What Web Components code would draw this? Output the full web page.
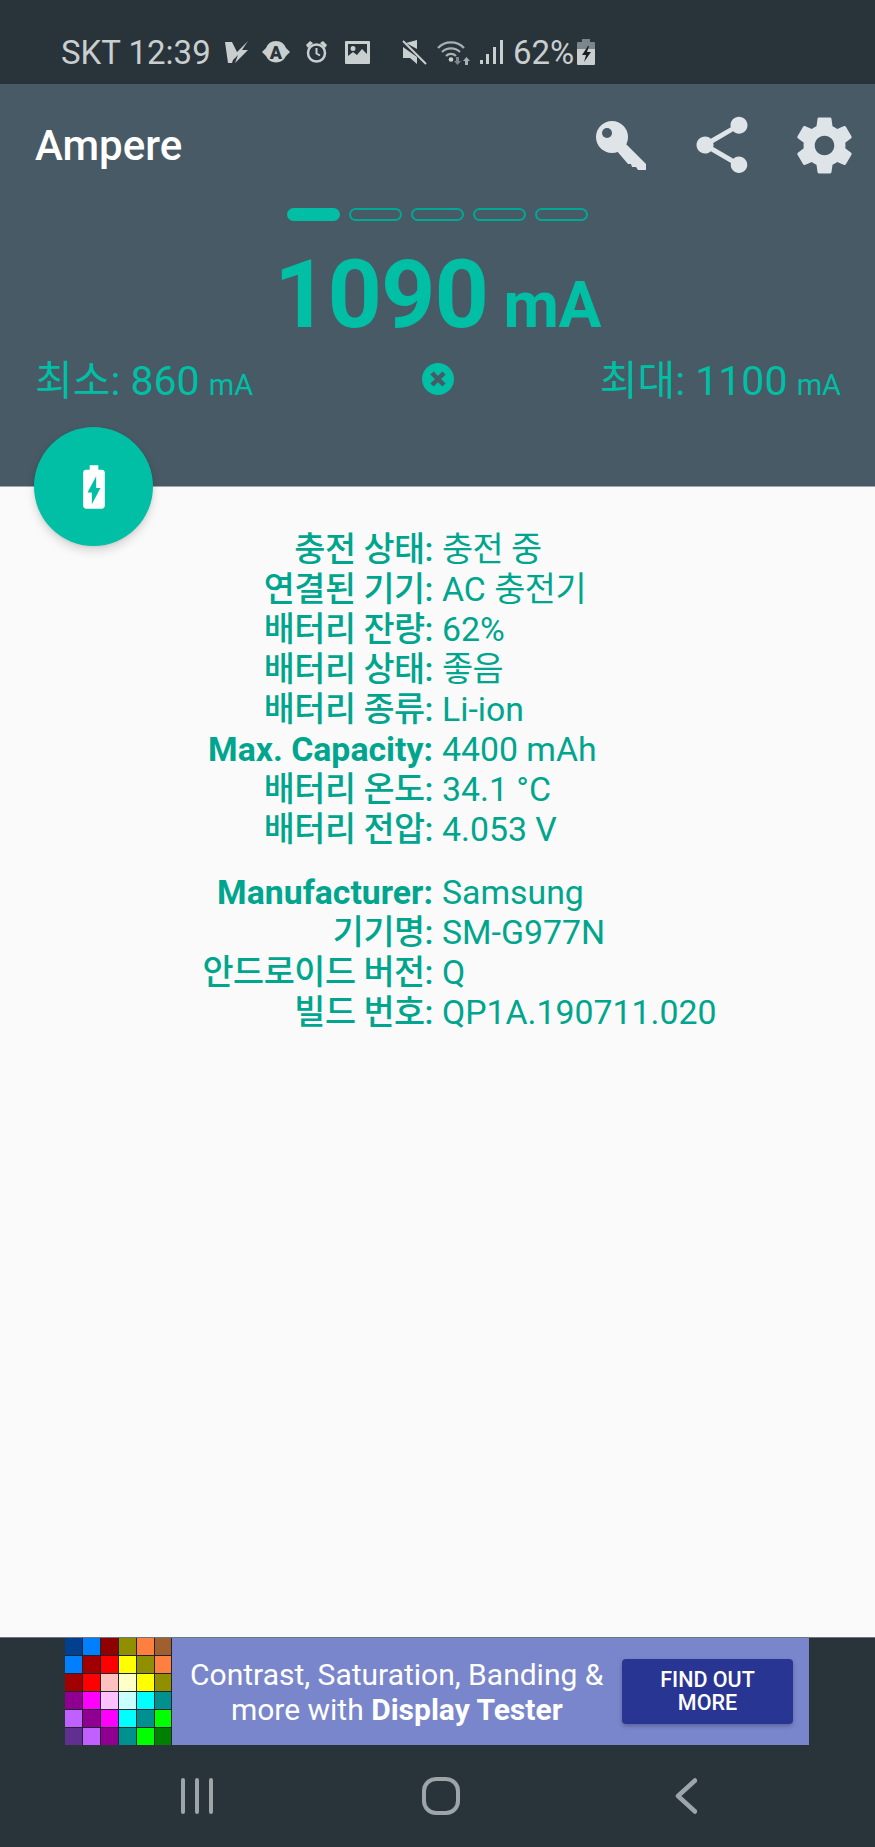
<!DOCTYPE html>
<html lang="ko">
<head>
<meta charset="utf-8">
<title>Ampere</title>
<style>
  html, body { margin: 0; padding: 0; background: #fafafa; }
  body { font-family: Roboto, "Noto Sans CJK KR", sans-serif; }
</style>
</head>
<body>
<ampere-app>
  <status-bar></status-bar>
  <app-header></app-header>
  <info-panel>
    <info-group>
      <info-row><span slot="label" lang="ko">충전 상태:</span><span lang="ko">충전 중</span></info-row>
      <info-row><span slot="label" lang="ko">연결된 기기:</span>AC <span lang="ko">충전기</span></info-row>
      <info-row><span slot="label" lang="ko">배터리 잔량:</span>62%</info-row>
      <info-row><span slot="label" lang="ko">배터리 상태:</span><span lang="ko">좋음</span></info-row>
      <info-row><span slot="label" lang="ko">배터리 종류:</span>Li-ion</info-row>
      <info-row><span slot="label">Max. Capacity:</span>4400 mAh</info-row>
      <info-row><span slot="label" lang="ko">배터리 온도:</span>34.1 °C</info-row>
      <info-row><span slot="label" lang="ko">배터리 전압:</span>4.053 V</info-row>
    </info-group>
    <info-group>
      <info-row><span slot="label">Manufacturer:</span>Samsung</info-row>
      <info-row><span slot="label" lang="ko">기기명:</span>SM-G977N</info-row>
      <info-row><span slot="label" lang="ko">안드로이드 버전:</span>Q</info-row>
      <info-row><span slot="label" lang="ko">빌드 번호:</span>QP1A.190711.020</info-row>
    </info-group>
  </info-panel>
  <charge-fab></charge-fab>
  <bottom-bar>
    <ad-banner></ad-banner>
    <nav-bar></nav-bar>
  </bottom-bar>
</ampere-app>

<script>
// Page shell
class AmpereApp extends HTMLElement {
  constructor() {
    super();
    this.attachShadow({ mode: "open" });
  }
  connectedCallback() {
    this.shadowRoot.innerHTML = `
      <style>
        :host {
          position: relative;
          display: flex;
          flex-direction: column;
          width: 875px;
          height: 1847px;
          overflow: hidden;
          background: #fafafa;
        }
      </style>
      <slot></slot>
    `;
  }
}

// Android status bar
class StatusBar extends HTMLElement {
  constructor() {
    super();
    this.attachShadow({ mode: "open" });
  }
  connectedCallback() {
    this.shadowRoot.innerHTML = `
      <style>
        :host {
          display: flex;
          align-items: center;
          flex: none;
          height: 84px;
          padding: 20px 0 0 61px;
          box-sizing: border-box;
          background: #29333a;
          color: #c9cecf;
          font: 400 33px/1 Roboto, sans-serif;
        }
        svg { display: block; flex: none; fill: #c9cecf; }
        .carrier { width: 164px; white-space: pre; }
        .pct { margin-left: 10px; width: 64px; white-space: nowrap; }
      </style>
      <span class="carrier">SKT 12:39</span>
      <!-- app notification icons -->
      <svg width="23" height="23" viewBox="0 0 23 23"><path d="M0 1h7l5 10L23 0l-6 9h6L10 22l3-8-5 5-1 3H3z"/></svg>
      <svg style="margin-left:14px" width="28" height="24" viewBox="0 0 28 24">
        <path d="M14 1a11 11 0 0 1 10 7l4 4-4 4a11 11 0 0 1-20 0l-4-4 4-4A11 11 0 0 1 14 1z"/>
        <text x="14" y="19" text-anchor="middle" font-family="Roboto" font-weight="900" font-size="18" fill="#29333a">A</text>
      </svg>
      <svg style="margin-left:16px" width="21" height="22" viewBox="0 0 21 22">
        <circle cx="10.500" cy="12" r="8.500" fill="none" stroke="#c9cecf" stroke-width="2.500"/>
        <path d="M0 4l4-4 3 2-5 5zM21 4l-4-4-3 2 5 5z"/>
        <path d="M10.500 7v5.500l3.500 2" fill="none" stroke="#c9cecf" stroke-width="2"/>
      </svg>
      <svg style="margin-left:18px" width="25" height="23" viewBox="0 0 25 23">
        <path fill-rule="evenodd" d="M1 0h23a1 1 0 0 1 1 1v21a1 1 0 0 1-1 1H1a1 1 0 0 1-1-1V1a1 1 0 0 1 1-1zM3 3v12l5-4 4 3 5-6 5 5V3zM8 5a2.500 2.500 0 1 1 0 5 2.500 2.500 0 0 1 0-5z"/>
      </svg>
      <!-- mute -->
      <svg style="margin-left:32px" width="25" height="25" viewBox="0 0 25 25">
        <path d="M15 0v9L4 3zM1 7l14 10v7l-7-6H1z"/>
        <path d="M1 1l23 23" fill="none" stroke="#c9cecf" stroke-width="2"/>
      </svg>
      <!-- wifi with traffic arrows -->
      <svg style="margin-left:10px" width="34" height="26" viewBox="0 0 34 26">
        <path d="M1 9a18 18 0 0 1 26 0M5 13a13 13 0 0 1 18 0M9 17a7 7 0 0 1 10 0" fill="none" stroke="#a9b0b3" stroke-width="2.200"/>
        <circle cx="14" cy="20.500" r="2.300"/>
        <path d="M19 18h3v4h2l-3.500 4-3.500-4h2z" fill="#7d878c"/>
        <path d="M28 26v-4h-2l3.500-4 3.500 4h-2v4z" fill="#a9b0b3"/>
      </svg>
      <!-- signal -->
      <svg style="margin-left:9px" width="23" height="24" viewBox="0 0 23 24">
        <rect x="0" y="20" width="3" height="4"/><rect x="6" y="14" width="3" height="10"/>
        <rect x="13" y="7" width="3" height="17"/><rect x="20" y="0" width="3" height="24"/>
      </svg>
      <span class="pct">62%</span>
      <!-- battery -->
      <svg width="18" height="26" viewBox="0 0 18 26">
        <path fill="#7b858a" d="M5 0h8v3h4a1 1 0 0 1 1 1v6H0V4a1 1 0 0 1 1-1h4z"/>
        <path d="M0 10h18v15a1 1 0 0 1-1 1H1a1 1 0 0 1-1-1z"/>
        <path fill="#1b1f22" d="M11 7l-6 9h4l-2 7 7-10h-4l2-6z"/>
      </svg>
    `;
  }
}

// Toolbar, pager, current reading and min / max
class AppHeader extends HTMLElement {
  constructor() {
    super();
    this.attachShadow({ mode: "open" });
  }
  connectedCallback() {
    this.shadowRoot.innerHTML = `
      <style>
        :host {
          display: block;
          flex: none;
          height: 403px;
          box-sizing: border-box;
          background: #475a65;
          border-bottom: 1px solid #9da7ac;
          color: #00bfa5;
          font-family: Roboto, "Noto Sans CJK KR", sans-serif;
        }
        .toolbar {
          display: flex;
          align-items: center;
          height: 122px;
          padding: 0 17px 0 35px;
          box-sizing: border-box;
        }
        .title {
          font-size: 42px;
          font-weight: 500;
          color: #fff;
          margin-right: auto;
        }
        .toolbar svg { display: block; fill: #dfe4e8; }
        .pager {
          display: flex;
          justify-content: center;
          gap: 9.500px;
          margin-top: 2px;
        }
        .pager span {
          width: 52.500px;
          height: 13px;
          box-sizing: border-box;
          border: 2px solid #00a896;
          border-radius: 7px;
        }
        .pager span.on { background: #00bfa5; border-color: #00bfa5; }
        .reading {
          text-align: center;
          margin-top: 20px;
          font-weight: 700;
          font-size: 95px;
          letter-spacing: -1px;
          line-height: 108px;
          white-space: nowrap;
        }
        .reading small { font-size: 64px; letter-spacing: -0.5px; }
        .range {
          display: grid;
          grid-template-columns: 1fr auto 1fr;
          align-items: center;
          padding: 0 34px 0 35px;
          margin-top: -9px;
          font-size: 41px;
          line-height: 60px;
          white-space: nowrap;
        }
        .range small { font-size: 29px; margin-left: 2px; }
        .range .max { justify-self: end; }
        .range svg { display: block; margin-bottom: 8px; }
      </style>
      <div class="toolbar">
        <span class="title">Ampere</span>
        <svg width="50" height="51" viewBox="0 0 50 51">
          <circle cx="16" cy="17" r="16"/>
          <path d="M27 21L50 44v6h-8l-2-3h-4l-1-3h-3L20 30z"/>
          <circle cx="11" cy="13" r="5" fill="#475a65"/>
        </svg>
        <svg style="margin-left:42px" width="68" height="68" viewBox="0 0 24 24">
          <path d="M18 16.080c-.76 0-1.440.3-1.960.77L8.910 12.700c.05-.23.09-.46.09-.7s-.04-.47-.09-.7l7.050-4.110c.54.5 1.250.81 2.040.81 1.660 0 3-1.340 3-3s-1.340-3-3-3-3 1.340-3 3c0 .24.04.47.09.7L8.040 9.810C7.500 9.310 6.790 9 6 9c-1.660 0-3 1.340-3 3s1.340 3 3 3c.79 0 1.500-.31 2.040-.81l7.120 4.160c-.05.21-.08.43-.08.65 0 1.610 1.310 2.920 2.920 2.920 1.610 0 2.920-1.310 2.920-2.920s-1.310-2.920-2.920-2.920z"/>
        </svg>
        <svg style="margin-left:35px" width="67" height="67" viewBox="0 0 24 24">
          <path d="M19.430 12.980c.04-.32.07-.64.07-.98s-.03-.66-.07-.98l2.110-1.650c.19-.15.24-.42.12-.64l-2-3.460c-.12-.22-.39-.3-.61-.22l-2.490 1c-.52-.4-1.080-.73-1.690-.98l-.38-2.650C14.460 2.180 14.250 2 14 2h-4c-.25 0-.46.18-.49.42l-.38 2.650c-.61.25-1.170.59-1.690.98l-2.490-1c-.23-.09-.49 0-.61.22l-2 3.460c-.13.22-.07.49.12.64l2.110 1.650c-.04.32-.07.65-.07.98s.03.66.07.98l-2.110 1.650c-.19.15-.24.42-.12.64l2 3.460c.12.22.39.3.61.22l2.490-1c.52.4 1.080.73 1.690.98l.38 2.650c.03.24.24.42.49.42h4c.25 0 .46-.18.49-.42l.38-2.650c.61-.25 1.170-.59 1.690-.98l2.490 1c.23.09.49 0 .61-.22l2-3.460c.12-.22.07-.49-.12-.64l-2.110-1.650zM12 15.500c-1.930 0-3.500-1.570-3.500-3.500s1.570-3.500 3.500-3.500 3.500 1.570 3.500 3.500-1.570 3.500-3.500 3.500z"/>
        </svg>
      </div>
      <div class="pager">
        <span class="on"></span><span></span><span></span><span></span><span></span>
      </div>
      <div class="reading">1090<small> mA</small></div>
      <div class="range">
        <span>최소: 860<small> mA</small></span>
        <svg width="32" height="32" viewBox="0 0 32 32">
          <circle cx="16" cy="16" r="16" fill="#00bfa5"/>
          <path d="M10 10l12 12M22 10L10 22" fill="none" stroke="#475a65" stroke-width="4.500"/>
        </svg>
        <span class="max">최대: 1100<small> mA</small></span>
      </div>
    `;
  }
}

// Floating button over the header edge
class ChargeFab extends HTMLElement {
  constructor() {
    super();
    this.attachShadow({ mode: "open" });
  }
  connectedCallback() {
    this.shadowRoot.innerHTML = `
      <style>
        :host {
          position: absolute;
          left: 34px;
          top: 427px;
          width: 119px;
          height: 119px;
          display: flex;
          align-items: center;
          justify-content: center;
          border-radius: 50%;
          background: #00bfa5;
          box-shadow: 0 5px 10px rgba(0, 0, 0, 0.14), 0 1px 3px rgba(0, 0, 0, 0.08);
        }
        svg { display: block; fill: #fff; }
      </style>
      <svg width="52" height="52" viewBox="0 0 24 24">
        <path d="M15.670 4H14V2h-4v2H8.330C7.600 4 7 4.600 7 5.330v15.330C7 21.400 7.600 22 8.330 22h7.330c.74 0 1.340-.6 1.340-1.330V5.330C17 4.600 16.400 4 15.670 4zM11 20v-5.500H9L13 7v5.500h2L11 20z"/>
      </svg>
    `;
  }
}

// White area with the battery details
class InfoPanel extends HTMLElement {
  constructor() {
    super();
    this.attachShadow({ mode: "open" });
  }
  connectedCallback() {
    this.shadowRoot.innerHTML = `
      <style>
        :host {
          display: flex;
          flex-direction: column;
          gap: 23px;
          flex: 1;
          padding-top: 43px;
          background: #fafafa;
          color: #00a58e;
          font: 400 33.800px/40px Roboto, "Noto Sans CJK KR", sans-serif;
        }
      </style>
      <slot></slot>
    `;
  }
}

class InfoGroup extends HTMLElement {
  constructor() {
    super();
    this.attachShadow({ mode: "open" });
  }
  connectedCallback() {
    this.shadowRoot.innerHTML = `
      <style>:host { display: flex; flex-direction: column; }</style>
      <slot></slot>
    `;
  }
}

class InfoRow extends HTMLElement {
  constructor() {
    super();
    this.attachShadow({ mode: "open" });
  }
  connectedCallback() {
    this.shadowRoot.innerHTML = `
      <style>
        :host {
          display: grid;
          grid-template-columns: 433px 1fr;
          column-gap: 9px;
          white-space: nowrap;
        }
        .label { text-align: right; font-weight: 700; }
        /* hangul runs sit tighter, and the labels are lighter than the latin ones */
        ::slotted([lang="ko"]) { letter-spacing: -0.5px; }
        slot[name="label"]::slotted([lang="ko"]) { font-weight: 500; }
      </style>
      <div class="label"><slot name="label"></slot></div>
      <div><slot></slot></div>
    `;
  }
}

// Dark strip holding the ad and the nav buttons
class BottomBar extends HTMLElement {
  constructor() {
    super();
    this.attachShadow({ mode: "open" });
  }
  connectedCallback() {
    this.shadowRoot.innerHTML = `
      <style>
        :host {
          display: block;
          flex: none;
          height: 210px;
          box-sizing: border-box;
          background: #29333a;
          border-top: 1px solid #6d767c;
        }
      </style>
      <slot></slot>
    `;
  }
}

class AdBanner extends HTMLElement {
  constructor() {
    super();
    this.attachShadow({ mode: "open" });
  }
  connectedCallback() {
    const colors = [
      "#00408f", "#0080ff", "#900000", "#8f8f00", "#ff7f3f", "#9f5f2f",
      "#0080ff", "#a00000", "#ff0000", "#ffff00", "#8f8f00", "#ff7f3f",
      "#a00000", "#ff0000", "#ffc0c0", "#ffffc8", "#ffff00", "#8f8f00",
      "#900090", "#ff00ff", "#ffc0ff", "#c8ffff", "#00ffff", "#009090",
      "#c060ff", "#900090", "#ff00ff", "#00ffff", "#009090", "#00ff00",
      "#603090", "#c060ff", "#900090", "#009090", "#00ff00", "#008000",
    ];
    const cells = colors.map((c) => `<i style="background:${c}"></i>`).join("");
    this.shadowRoot.innerHTML = `
      <style>
        :host {
          display: flex;
          align-items: center;
          height: 107px;
          margin: 0 66px 0 65px;
          background: #7986cb;
          color: #fff;
          font-family: Roboto, sans-serif;
        }
        .swatch {
          display: grid;
          grid-template-columns: repeat(6, 1fr);
          grid-template-rows: repeat(6, 1fr);
          gap: 1px;
          flex: none;
          width: 106.500px;
          height: 107px;
          background: #20242c;
        }
        .copy {
          flex: 1;
          text-align: center;
          font-size: 30px;
          line-height: 35px;
          white-space: nowrap;
        }
        .copy b { font-weight: 700; }
        .cta {
          flex: none;
          width: 171px;
          height: 65px;
          margin-right: 16px;
          display: flex;
          align-items: center;
          justify-content: center;
          text-align: center;
          background: #283593;
          border-radius: 4px;
          box-shadow: 0 2px 4px rgba(0, 0, 0, 0.25);
          font-size: 21.500px;
          font-weight: 500;
          line-height: 22.500px;
        }
      </style>
      <div class="swatch">${cells}</div>
      <div class="copy">Contrast, Saturation, Banding &amp;<br>more with <b>Display Tester</b></div>
      <div class="cta">FIND OUT<br>MORE</div>
    `;
  }
}

class NavBar extends HTMLElement {
  constructor() {
    super();
    this.attachShadow({ mode: "open" });
  }
  connectedCallback() {
    this.shadowRoot.innerHTML = `
      <style>
        :host {
          display: grid;
          grid-template-columns: repeat(3, 1fr);
          justify-items: center;
          align-items: center;
          height: 102px;
          padding: 0 67px 0 75px;
        }
        svg { display: block; fill: none; stroke: #9da5a9; stroke-linecap: round; stroke-linejoin: round; }
      </style>
      <svg width="32" height="36" viewBox="0 0 32 36" stroke-width="4">
        <path d="M2 2v32M16 2v32M30 2v32"/>
      </svg>
      <svg width="38" height="38" viewBox="0 0 38 38" stroke-width="4">
        <rect x="2" y="2" width="34" height="34" rx="12"/>
      </svg>
      <svg width="22" height="36" viewBox="0 0 22 36" stroke-width="4.500">
        <path d="M20 2.500L3 18l17 15.500"/>
      </svg>
    `;
  }
}

customElements.define("ampere-app", AmpereApp);
customElements.define("status-bar", StatusBar);
customElements.define("app-header", AppHeader);
customElements.define("charge-fab", ChargeFab);
customElements.define("info-panel", InfoPanel);
customElements.define("info-group", InfoGroup);
customElements.define("info-row", InfoRow);
customElements.define("bottom-bar", BottomBar);
customElements.define("ad-banner", AdBanner);
customElements.define("nav-bar", NavBar);
</script>
</body>
</html>
